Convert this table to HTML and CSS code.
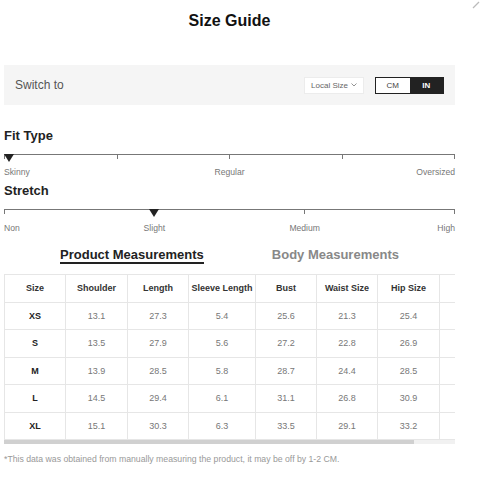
FILE: index.html
```html
<!DOCTYPE html>
<html>
<head>
<meta charset="utf-8">
<link rel="stylesheet" href="styles.css">
</head>
<body>
<svg class="close" width="10" height="10" viewBox="0 0 10 10"><path d="M3 8 L9 2" stroke="#bbb" stroke-width="1.2"/></svg>
<div class="page">
  <h1 class="title">Size Guide</h1>
  <div class="bar">
    <span class="switch">Switch to</span>
    <div class="bar-right">
      <div class="local">Local Size <svg width="6" height="4" viewBox="0 0 6 4"><path d="M0.5 0.5 L3 3 L5.5 0.5" fill="none" stroke="#777" stroke-width="0.8"/></svg></div>
      <div class="toggle"><span class="opt">CM</span><span class="opt on">IN</span></div>
    </div>
  </div>

  <h2 class="sec fit-head">Fit Type</h2>
  <div class="scale">
    <div class="ticks"><i></i><i></i><i></i><i></i><i></i></div>
    <span class="marker" style="left:0"></span>
  </div>
  <div class="labels four">
    <span class="l-first">Skinny</span>
    <span class="l-mid">Regular</span>
    <span class="l-last">Oversized</span>
  </div>

  <h2 class="sec stretch-head">Stretch</h2>
  <div class="scale">
    <div class="ticks"><i></i><i></i><i></i><i></i></div>
    <span class="marker" style="left:145px"></span>
  </div>
  <div class="labels six">
    <span class="l-first">Non</span>
    <span class="l-a">Slight</span>
    <span class="l-b">Medium</span>
    <span class="l-last">High</span>
  </div>

  <div class="tabs">
    <span class="tab active">Product Measurements</span>
    <span class="tab">Body Measurements</span>
  </div>

  <div class="table-wrap">
    <table class="sizes">
      <colgroup>
        <col style="width:61px"><col style="width:62px"><col style="width:61px"><col style="width:67px"><col style="width:61px"><col style="width:61px"><col style="width:62px"><col style="width:61px">
      </colgroup>
      <thead>
        <tr><th>Size</th><th>Shoulder</th><th>Length</th><th>Sleeve Length</th><th>Bust</th><th>Waist Size</th><th>Hip Size</th><th></th></tr>
      </thead>
      <tbody>
        <tr><td class="sz">XS</td><td>13.1</td><td>27.3</td><td>5.4</td><td>25.6</td><td>21.3</td><td>25.4</td><td></td></tr>
        <tr><td class="sz">S</td><td>13.5</td><td>27.9</td><td>5.6</td><td>27.2</td><td>22.8</td><td>26.9</td><td></td></tr>
        <tr><td class="sz">M</td><td>13.9</td><td>28.5</td><td>5.8</td><td>28.7</td><td>24.4</td><td>28.5</td><td></td></tr>
        <tr><td class="sz">L</td><td>14.5</td><td>29.4</td><td>6.1</td><td>31.1</td><td>26.8</td><td>30.9</td><td></td></tr>
        <tr><td class="sz">XL</td><td>15.1</td><td>30.3</td><td>6.3</td><td>33.5</td><td>29.1</td><td>33.2</td><td></td></tr>
      </tbody>
    </table>
  </div>
  <div class="scrollbar"><div class="thumb"></div></div>
  <p class="note">*This data was obtained from manually measuring the product, it may be off by 1-2 CM.</p>
  <div class="bottom-line"></div>
</div>
</body>
</html>
```

FILE: styles.css
```css
* { box-sizing: border-box; }
html, body { margin: 0; padding: 0; background: #fff; }
body {
  font-family: "Liberation Sans", Arial, sans-serif;
  color: #222;
  width: 480px;
  height: 488px;
  overflow: hidden;
  position: relative;
}
.close { position: absolute; top: 0; right: 0; }
.page { width: 451px; margin-left: 4px; }
.title {
  margin: 11px 0 0;
  font-size: 16px;
  line-height: 20px;
  font-weight: bold;
  text-align: center;
  color: #111;
}
.bar {
  margin-top: 34px;
  height: 40px;
  background: #f5f5f5;
  display: flex;
  align-items: center;
  justify-content: space-between;
  padding: 0 11px;
}
.switch { font-size: 12px; color: #555; }
.bar-right { display: flex; align-items: center; gap: 11px; }
.local {
  width: 60px;
  height: 17px;
  background: #fff;
  border: 1px solid #ececec;
  font-size: 8px;
  color: #666;
  display: flex;
  align-items: center;
  justify-content: center;
  gap: 3px;
}
.toggle {
  display: flex;
  width: 69px;
  height: 17px;
  border: 1px solid #222;
  background: #fff;
}
.opt {
  flex: 1;
  display: flex;
  align-items: center;
  justify-content: center;
  font-size: 8px;
  color: #444;
}
.opt.on { background: #222; color: #fff; font-weight: bold; }
.sec {
  margin: 0;
  font-size: 13px;
  line-height: 16px;
  font-weight: bold;
  color: #222;
}
.fit-head { margin-top: 23px; }
.stretch-head { margin-top: 6px; }
.scale { position: relative; height: 5px; margin-top: 10px; }
.stretch-head + .scale { margin-top: 10px; }
.ticks {
  display: flex;
  justify-content: space-between;
  border-top: 1px solid #777;
  height: 5px;
}
.ticks i { display: block; width: 1px; height: 4px; background: #777; }
.marker {
  position: absolute;
  top: 0;
  width: 0;
  height: 0;
  border-left: 5px solid transparent;
  border-right: 5px solid transparent;
  border-top: 8px solid #222;
}
.labels {
  display: grid;
  font-size: 8.6px;
  line-height: 10px;
  color: #777;
  margin-top: 8px;
}
.stretch-head ~ .labels { margin-top: 9px; }
.labels.four { grid-template-columns: repeat(4, 1fr); }
.labels.four .l-mid { grid-column: 2 / 4; text-align: center; }
.labels.four .l-last { grid-column: 4; text-align: right; }
.labels.six { grid-template-columns: repeat(6, 1fr); }
.labels.six .l-a { grid-column: 2 / 4; text-align: center; }
.labels.six .l-b { grid-column: 4 / 6; text-align: center; }
.labels.six .l-last { grid-column: 6; text-align: right; }
.tabs {
  margin-top: 15px;
  display: flex;
  justify-content: center;
  gap: 68px;
}
.tab {
  font-size: 13px;
  line-height: 14px;
  font-weight: bold;
  color: #888;
  border-bottom: 2px solid transparent;
}
.tab.active { color: #222; border-bottom-color: #222; }
.table-wrap {
  margin-top: 10px;
  width: 451px;
  overflow: hidden;
}
.sizes {
  border-collapse: collapse;
  table-layout: fixed;
  width: 496px;
}
.sizes th, .sizes td {
  border: 1px solid #e6e6e6;
  height: 27.5px;
  padding: 0;
  text-align: center;
  font-size: 9px;
  color: #777;
}
.sizes th { color: #333; font-weight: bold; }
.sizes td.sz { color: #222; font-weight: bold; }
.sizes th:last-child, .sizes td:last-child { border-right: none; }
.scrollbar {
  height: 4px;
  background: #f1f1f1;
  margin-top: 0;
}
.thumb { width: 410px; height: 4px; background: #d0d0d0; }
.note {
  margin: 10px 0 0;
  font-size: 8.7px;
  line-height: 10px;
  color: #999;
}
.bottom-line {
  margin-top: 24px;
  height: 1px;
  background: #eee;
}
```
